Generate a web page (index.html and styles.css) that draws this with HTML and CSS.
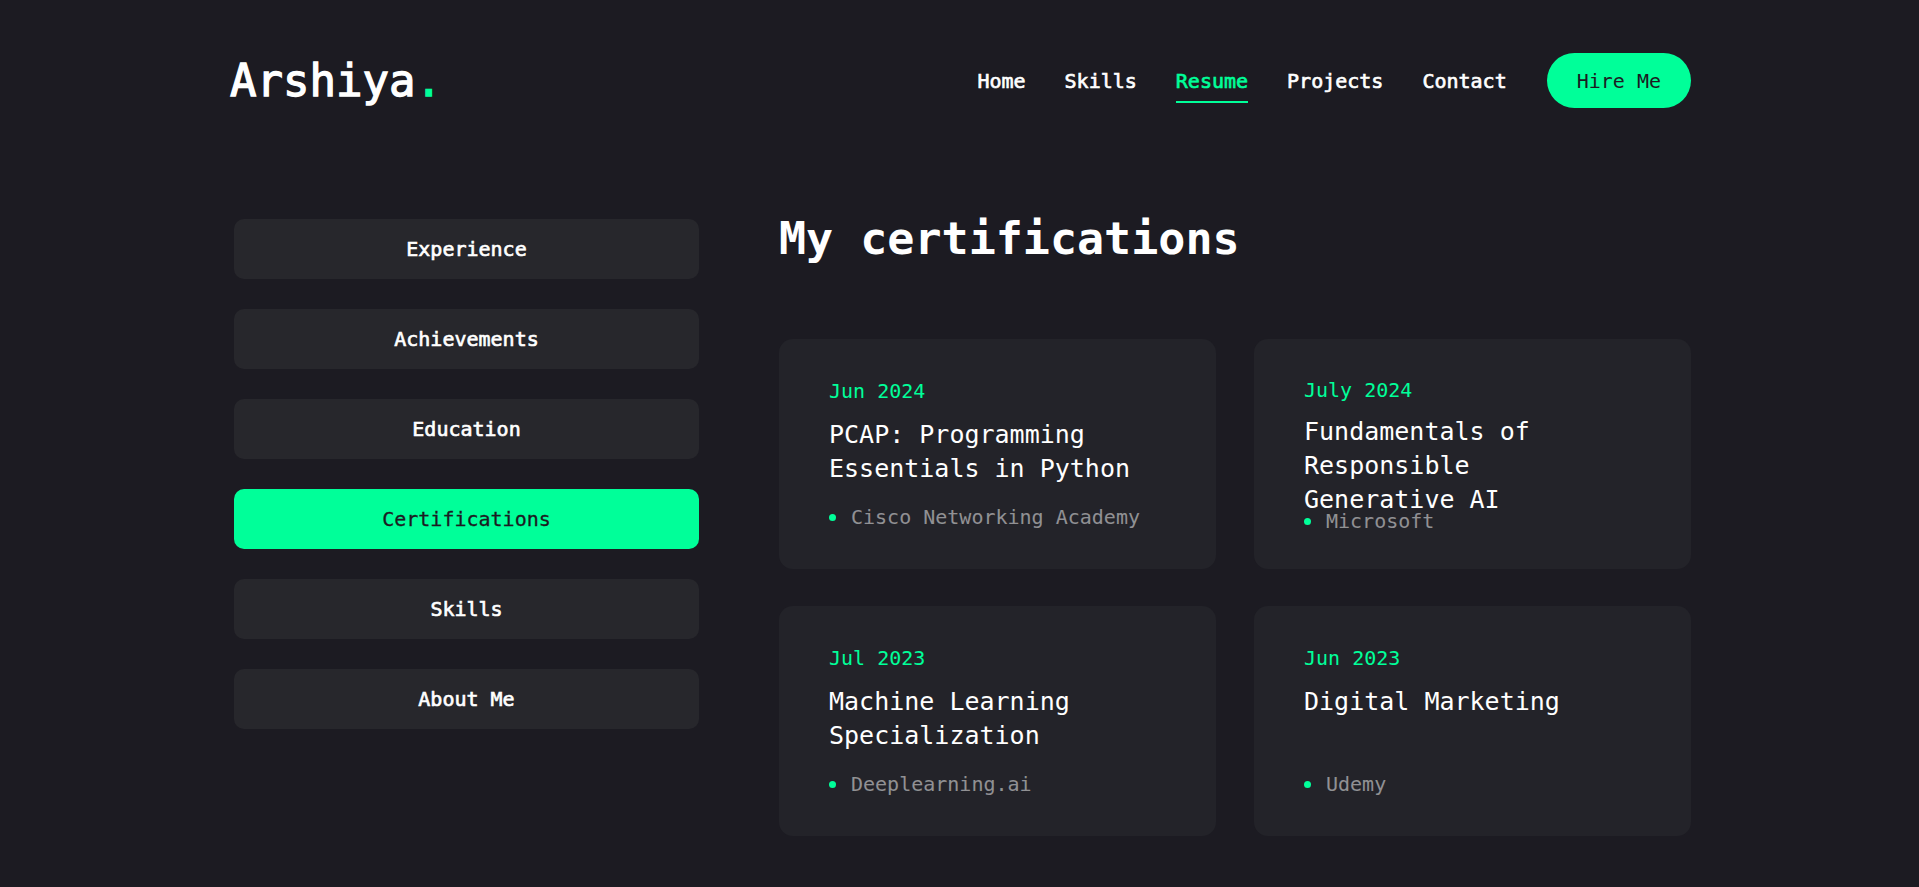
FILE: index.html
```html
<!DOCTYPE html>
<html lang="en">
<head>
<meta charset="utf-8">
<title>Arshiya — Resume</title>
<link rel="stylesheet" href="styles.css">
</head>
<body>
<div class="page">
  <header class="site-header">
    <a class="logo" href="#">Arshiya<span class="logo-dot">.</span></a>
    <nav class="nav">
      <a class="nav-link" href="#">Home</a>
      <a class="nav-link" href="#">Skills</a>
      <a class="nav-link is-active" href="#">Resume</a>
      <a class="nav-link" href="#">Projects</a>
      <a class="nav-link" href="#">Contact</a>
      <a class="hire-btn" href="#">Hire Me</a>
    </nav>
  </header>

  <main class="resume">
    <aside class="tabs">
      <button class="tab">Experience</button>
      <button class="tab">Achievements</button>
      <button class="tab">Education</button>
      <button class="tab is-active">Certifications</button>
      <button class="tab">Skills</button>
      <button class="tab">About Me</button>
    </aside>

    <section class="panel">
      <h1 class="panel-title">My certifications</h1>
      <div class="cert-grid">
        <article class="cert-card">
          <span class="cert-date">Jun 2024</span>
          <h3 class="cert-name">PCAP: Programming Essentials in Python</h3>
          <p class="cert-issuer"><span class="dot"></span>Cisco Networking Academy</p>
        </article>
        <article class="cert-card is-long">
          <span class="cert-date">July 2024</span>
          <h3 class="cert-name">Fundamentals of Responsible Generative AI</h3>
          <p class="cert-issuer"><span class="dot"></span>Microsoft</p>
        </article>
        <article class="cert-card">
          <span class="cert-date">Jul 2023</span>
          <h3 class="cert-name">Machine Learning Specialization</h3>
          <p class="cert-issuer"><span class="dot"></span>Deeplearning.ai</p>
        </article>
        <article class="cert-card">
          <span class="cert-date">Jun 2023</span>
          <h3 class="cert-name">Digital Marketing</h3>
          <p class="cert-issuer"><span class="dot"></span>Udemy</p>
        </article>
      </div>
    </section>
  </main>
</div>
</body>
</html>
```

FILE: styles.css
```css
* {
  box-sizing: border-box;
}

html, body {
  margin: 0;
  padding: 0;
}

body {
  background: #1c1b22;
  color: #ffffff;
  font-family: "DejaVu Sans Mono", "Liberation Mono", monospace;
  min-height: 887px;
}

a {
  color: inherit;
  text-decoration: none;
}

.page {
  width: 1457px;
  margin-left: 234px;
}

/* Header */
.site-header {
  display: flex;
  align-items: center;
  justify-content: space-between;
  height: 55px;
  margin-top: 53px;
}

.logo {
  font-size: 44px;
  line-height: 1;
  font-weight: 400;
  -webkit-text-stroke: 1.3px currentColor;
  margin-left: -4px;
}

.logo-dot {
  color: #00ff99;
}

.nav {
  display: flex;
  align-items: center;
  gap: 39px;
}

.nav-link {
  position: relative;
  font-size: 20px;
  line-height: 28px;
  font-weight: 400;
  -webkit-text-stroke: 0.65px currentColor;
  color: #ffffff;
}

.nav-link.is-active {
  color: #00ff99;
}

.nav-link.is-active::after {
  content: "";
  position: absolute;
  left: 0;
  right: 0;
  bottom: -8px;
  height: 2px;
  background: #00ff99;
}

.hire-btn {
  display: flex;
  align-items: center;
  height: 55px;
  padding: 0 30px;
  margin-left: 1px;
  border-radius: 999px;
  background: #00ff99;
  color: #1c1b22;
  font-size: 20px;
  line-height: 28px;
  font-weight: 400;
}

/* Main */
.resume {
  display: grid;
  grid-template-columns: 465px 912px;
  column-gap: 80px;
  margin-top: 111px;
}

.tabs {
  display: flex;
  flex-direction: column;
  gap: 30px;
}

.tab {
  display: flex;
  align-items: center;
  justify-content: center;
  height: 60px;
  border: 0;
  border-radius: 10px;
  background: #27272c;
  color: #ffffff;
  font-family: inherit;
  font-size: 20px;
  line-height: 28px;
  font-weight: 400;
  -webkit-text-stroke: 0.65px currentColor;
  padding: 0;
}

.tab.is-active {
  background: #00ff99;
  color: #1c1b22;
  -webkit-text-stroke: 0.3px currentColor;
}

.panel-title {
  margin: 0;
  font-size: 45px;
  line-height: 40px;
  font-weight: 700;
}

.cert-grid {
  display: grid;
  grid-template-columns: 437px 437px;
  column-gap: 38px;
  row-gap: 37px;
  margin-top: 80px;
}

.cert-card {
  display: flex;
  flex-direction: column;
  height: 230px;
  padding: 38px 50px;
  border-radius: 14px;
  background: #232329;
}

.cert-date {
  font-size: 20px;
  line-height: 28px;
  color: #00ff99;
}

.cert-name {
  margin: 13px 0 0;
  max-width: 325px;
  height: 68px;
  font-size: 25px;
  line-height: 34px;
  font-weight: 400;
  color: #ffffff;
}

.cert-issuer {
  display: flex;
  align-items: center;
  gap: 15px;
  margin: 17px 0 0;
  font-size: 20px;
  line-height: 28px;
  color: rgba(255, 255, 255, 0.5);
}

.cert-card.is-long {
  padding-top: 37px;
}

.cert-card.is-long .cert-name {
  margin-top: 11px;
}

.cert-card.is-long .cert-issuer {
  margin-top: 24px;
}

.dot {
  width: 7px;
  height: 7px;
  border-radius: 50%;
  background: #00ff99;
  flex: none;
}
```
